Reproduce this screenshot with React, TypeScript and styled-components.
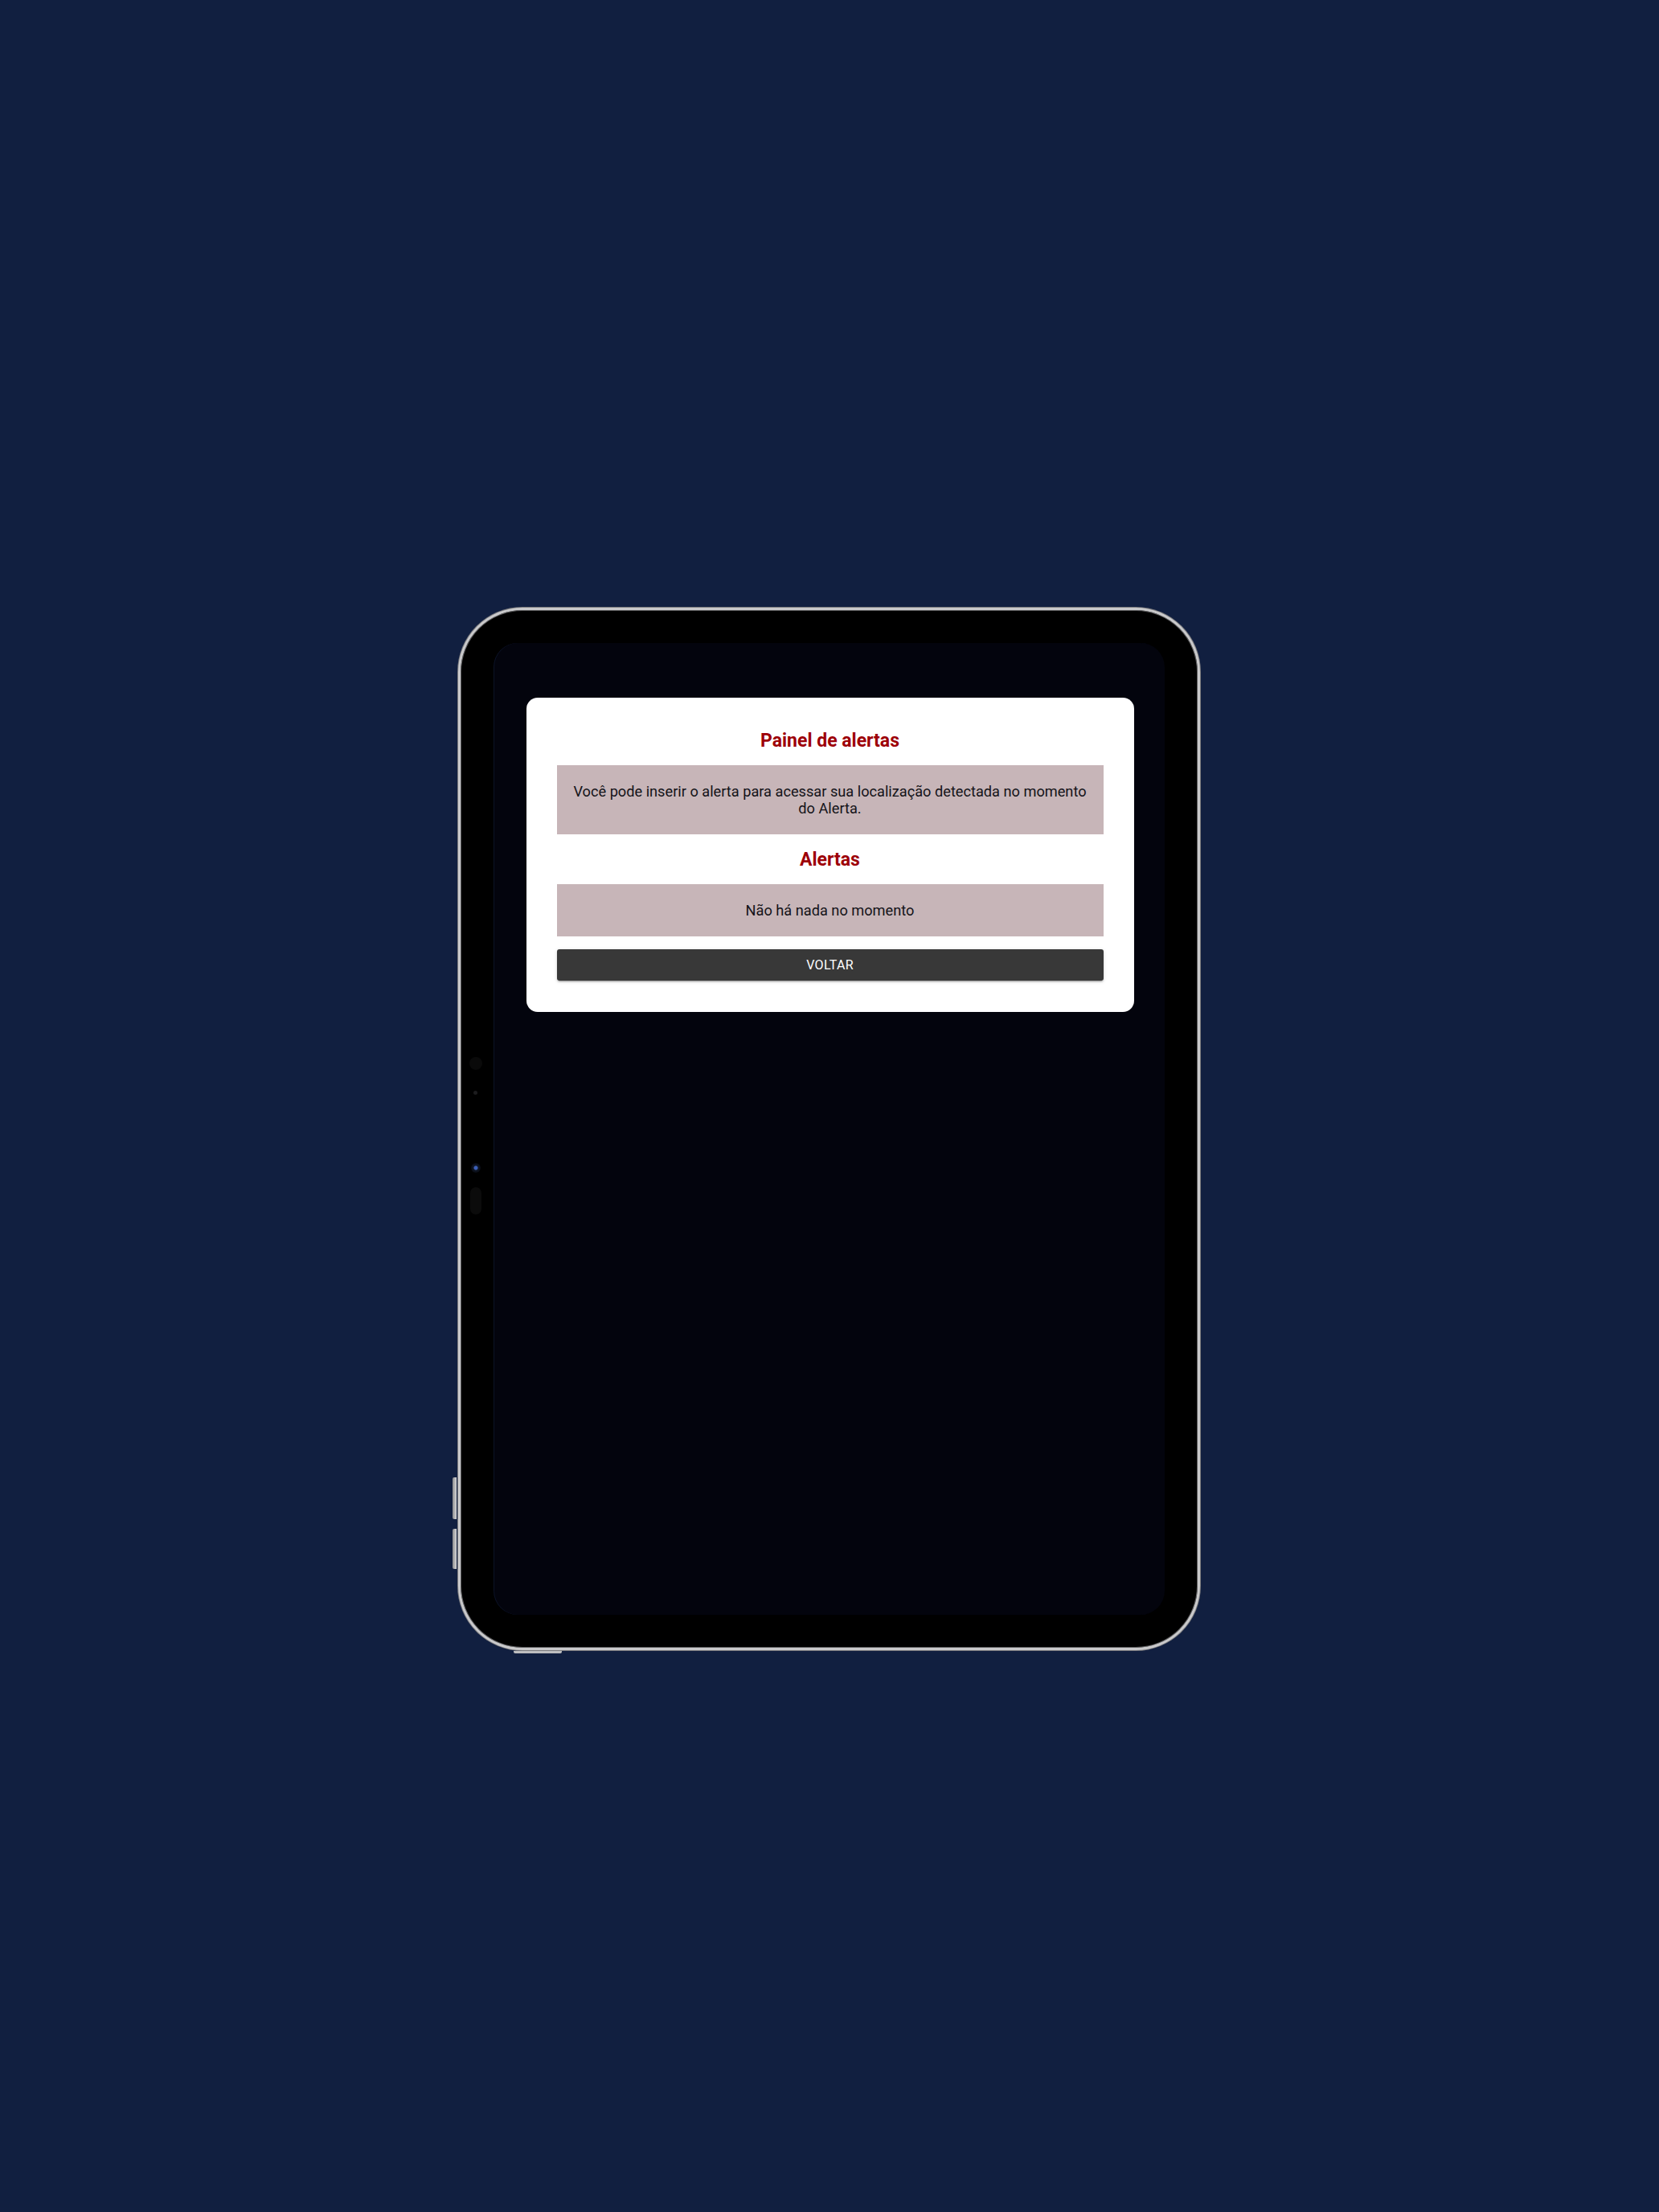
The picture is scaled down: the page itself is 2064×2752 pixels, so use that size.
import styled, {createGlobalStyle} from 'styled-components';

const GlobalStyle = createGlobalStyle`
  html, body {
    margin: 0;
    padding: 0;
    background: #111f40;
  }
  body {
    font-family: Roboto, 'Liberation Sans', Arial, sans-serif;
    -webkit-font-smoothing: antialiased;
  }
`;

const Page = styled.div`
  width: 2064px;
  height: 2752px;
  box-sizing: border-box;
  padding-top: 756px;
  display: flex;
  justify-content: center;
  align-items: flex-start;
  background: #111f40;
`;

const Tablet = styled.div`
  position: relative;
  box-sizing: border-box;
  width: 923px;
  height: 1297px;
  margin-left: -2px;
  padding: 41px;
  border: 3px solid #c9c9cb;
  border-radius: 80px;
  background: #000;
  box-shadow: inset 0 0 0 1px #5e5e60, 0 0 0 1px #7b7b7e;
  display: flex;
`;

const SideButton = styled.div<{top: number; height: number}>`
  position: absolute;
  left: -10px;
  top: ${(p) => p.top}px;
  width: 5px;
  height: ${(p) => p.height}px;
  border-radius: 2px 0 0 2px;
  background: linear-gradient(90deg, #8c8c8e, #d6d6d8);
`;

const BottomLip = styled.div`
  position: absolute;
  left: 66px;
  bottom: -7px;
  width: 60px;
  height: 3px;
  border-radius: 0 0 2px 2px;
  background: #bdbdbf;
`;

const Sensor = styled.div<{top: number; size: number; tall?: number; color: string}>`
  position: absolute;
  left: ${(p) => 19 - p.size / 2}px;
  top: ${(p) => p.top}px;
  width: ${(p) => p.size}px;
  height: ${(p) => p.tall ?? p.size}px;
  border-radius: ${(p) => p.size / 2}px;
  background: ${(p) => p.color};
`;

const Lens = styled.div`
  position: absolute;
  left: 13px;
  top: 688px;
  width: 12px;
  height: 12px;
  border-radius: 50%;
  background: radial-gradient(circle, #3c5fb8 0 2px, #101828 3px, #080a12 6px);
`;

const Screen = styled.div`
  flex: 1;
  box-sizing: border-box;
  border-radius: 30px;
  background: #03040d;
  box-shadow: inset 1px 0 0 #0c1326;
  padding: 68px 38px 0 41px;
  display: flex;
  flex-direction: column;
  align-items: stretch;
`;

const Modal = styled.div`
  box-sizing: border-box;
  background: #fff;
  border-radius: 14px;
  padding: 40px 38px 39px;
  display: flex;
  flex-direction: column;
  align-items: stretch;
`;

const Title = styled.h2`
  margin: 0 0 16px;
  font-size: 23px;
  line-height: 28px;
  font-weight: 700;
  color: #9d0008;
  text-align: center;
`;

const InfoBox = styled.div`
  background: #c7b5b8;
  padding: 22px 20px;
  margin-bottom: 18px;
  font-size: 18.2px;
  line-height: 21px;
  color: #141318;
  text-align: center;
`;

const BackButton = styled.button`
  margin-top: -2px;
  height: 39px;
  border: 0;
  border-radius: 3px;
  background: #383838;
  color: #fff;
  font-family: Roboto, 'Liberation Sans', Arial, sans-serif;
  font-size: 16px;
  font-weight: 400;
  text-transform: uppercase;
  letter-spacing: 0.3px;
  cursor: pointer;
  box-shadow: 0 3px 1px -2px rgba(0, 0, 0, 0.2), 0 2px 2px 0 rgba(0, 0, 0, 0.14),
    0 1px 5px 0 rgba(0, 0, 0, 0.12);
`;

export default function App() {
  return (
    <>
      <GlobalStyle />
      <Page>
        <Tablet>
          <SideButton top={1079} height={52} />
          <SideButton top={1143} height={50} />
          <BottomLip />
          <Sensor top={556} size={16} color="#0a0a0a" />
          <Sensor top={598} size={5} color="#1c1c1e" />
          <Lens />
          <Sensor top={718} size={14} tall={34} color="#0b0b0b" />
          <Screen>
            <Modal>
              <Title>Painel de alertas</Title>
              <InfoBox>
                Você pode inserir o alerta para acessar sua localização detectada no momento
                do Alerta.
              </InfoBox>
              <Title>Alertas</Title>
              <InfoBox>Não há nada no momento</InfoBox>
              <BackButton>Voltar</BackButton>
            </Modal>
          </Screen>
        </Tablet>
      </Page>
    </>
  );
}
